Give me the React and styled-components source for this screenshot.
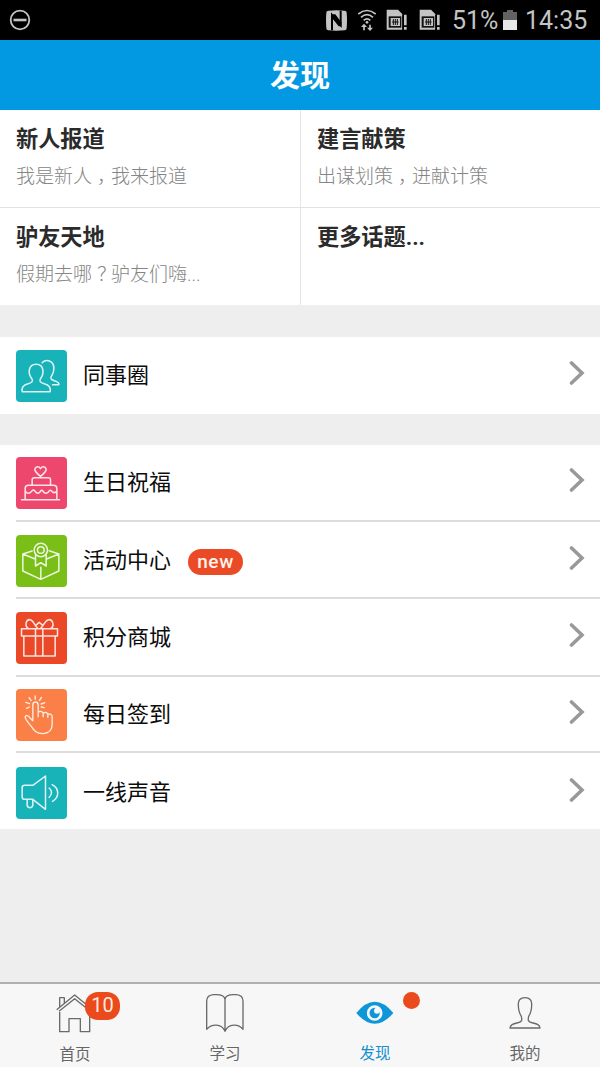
import React from "react";
import styled, { createGlobalStyle } from "styled-components";

const Global = createGlobalStyle`
  * { box-sizing: border-box; }
  body { margin: 0; background: #ededed; font-family: Roboto, "Noto Sans CJK SC", sans-serif; }
  svg { display: block; flex: none; }
`;

const Screen = styled.div`
  width: 600px;
  height: 1067px;
  display: flex;
  flex-direction: column;
  background: #eeeeee;
  overflow: hidden;
`;

const StatusBar = styled.div`
  height: 40px;
  flex: none;
  background: #000;
  display: flex;
  align-items: center;
  padding: 0 12px 0 9px;
  color: #c4c4c4;
`;
const StatusIcon = styled.svg`
  margin-right: ${(p) => p.$gap || 0}px;
`;
const StatusText = styled.span`
  width: ${(p) => p.$w}px;
  margin-right: ${(p) => p.$gap || 0}px;
  font-size: 25px;
  line-height: 40px;
  padding-top: 2px;
  white-space: nowrap;
`;
const Spacer = styled.div`
  flex: 1;
`;

const Header = styled.h1`
  height: 70px;
  flex: none;
  margin: 0;
  padding-top: 1px;
  background: #0399e2;
  color: #fff;
  font-size: 30px;
  font-weight: 700;
  line-height: 70px;
  text-align: center;
`;

const Topics = styled.div`
  display: grid;
  grid-template-columns: 301px 1fr;
  grid-template-rows: 98px 97px;
  background: #fff;
`;
const Topic = styled.div`
  padding: 13px 15px 0 16px;
  border-right: ${(p) => (p.$right ? "1px solid #e6e6e6" : "0")};
  border-bottom: ${(p) => (p.$bottom ? "1px solid #e2e2e2" : "0")};
`;
const TopicTitle = styled.div`
  font-size: 22.2px;
  font-weight: 700;
  line-height: 32px;
  color: #2b2b2b;
`;
const TopicText = styled.div`
  margin-top: 8px;
  font-size: 19px;
  font-weight: 300;
  line-height: 28px;
  color: #858585;
  white-space: nowrap;
`;
const Mark = styled.span`
  display: inline-block;
  width: 19px;
  padding-left: 5px;
  font-feature-settings: "halt";
`;

const List = styled.div`
  margin-top: ${(p) => p.$top}px;
  background: #fff;
`;
const Row = styled.div`
  height: ${(p) => p.$h}px;
  display: flex;
  align-items: center;
  margin-left: 16px;
  padding-right: 15px;
  padding-top: ${(p) => p.$shift || 0}px;
  border-bottom: ${(p) => (p.$last ? "0" : "2px solid #dcdcdf")};
`;
const Tile = styled.svg`
  width: 51px;
  height: 52px;
  border-radius: 4px;
  background: ${(p) => p.$bg};
  fill: none;
  stroke: #fff;
  stroke-opacity: 0.85;
  stroke-width: 4.6;
  stroke-linecap: round;
  stroke-linejoin: round;
`;
const RowLabel = styled.span`
  margin-left: 16px;
  font-size: 22px;
  line-height: 32px;
  color: #0c0c0c;
`;
const NewBadge = styled.span`
  width: 55px;
  height: 26px;
  margin: 3px 0 0 17px;
  border-radius: 13px;
  background: #eb4a26;
  color: #fff3ea;
  font-size: 19px;
  font-weight: 500;
  letter-spacing: 0.6px;
  line-height: 25px;
  text-align: center;
`;
const Chevron = styled.svg`
  margin: 0 0 5px auto;
  fill: none;
  stroke: #999;
  stroke-width: 3.6;
  stroke-linecap: round;
`;

const TabBar = styled.nav`
  height: 85px;
  flex: none;
  display: grid;
  grid-template-columns: repeat(4, 1fr);
  border-top: 2px solid #b0b0b0;
  background: #f7f7f7;
`;
const Tab = styled.div`
  position: relative;
  display: flex;
  flex-direction: column;
  align-items: center;
  padding-top: 6px;
  color: ${(p) => (p.$active ? "#1390cd" : "#666")};
  font-size: 15.5px;
  line-height: 22px;
`;
const TabIcon = styled.svg`
  width: 40px;
  height: 44px;
  margin-bottom: ${(p) => p.$gap}px;
  fill: none;
  stroke: #6a6a6a;
  stroke-width: 4;
  stroke-linejoin: round;
`;
const CountBadge = styled.span`
  position: absolute;
  left: 85px;
  top: 8px;
  width: 35px;
  height: 28px;
  border-radius: 13px;
  background: #eb4a1d;
  color: #ffe9dc;
  font-size: 20px;
  line-height: 27px;
  text-align: center;
`;
const DotBadge = styled.span`
  position: absolute;
  left: 103px;
  top: 8px;
  width: 17px;
  height: 17px;
  border-radius: 50%;
  background: #eb4a1d;
`;

const drawings = {
  friends: (
    <>
      <path d="M18 125C15 110 24 104 36 101C49 98 51 93 47 86C35 72 35 43 60 43C85 43 84 72 73 86C69 93 71 98 84 101C96 104 105 110 102 125Z" />
      <path d="M78 38C88 27 114 29 113 56C113 70 108 74 105 80C101 88 108 90 117 93C126 96 129 100 128 104H109" />
    </>
  ),
  cake: (
    <>
      <path d="M73 58C64 51 55 44 56 36C59 27 69 28 73 35C77 28 87 27 90 36C91 44 82 51 73 58Z" />
      <path d="M48 83V68Q48 62 54 62H97Q103 62 103 68V83" />
      <path d="M27 126V95Q27 85 37 85H112Q122 85 122 95V126M16 128H130M28 103C34 112 42 110 48 101Q52 97 56 102C63 112 70 110 74 101Q77 98 80 102C86 112 95 110 100 101Q104 98 108 104Q114 110 121 104" />
    </>
  ),
  box: (
    <>
      <circle cx="74" cy="45" r="20" />
      <circle cx="74" cy="45" r="10" />
      <path d="M58 60V93L74 83L90 93V60M48 48L20 57V108L74 133L128 108V57L99 47M20 57L55 71M128 57L93 71M74 97V133" />
    </>
  ),
  gift: (
    <>
      <path d="M16 50H124V72H16ZM23 72V132H117V72M58 50V132M80 50V132M65 49C56 44 54 26 42 23C29 21 25 42 36 49M73 49C82 44 85 26 97 23C110 21 116 42 104 49M59 40L69 31L80 40" />
    </>
  ),
  tap: (
    <g strokeWidth="4">
      <path d="M50 93V47Q51 39 58 39Q65 39 66 47V83M66 70Q74 63 81 72V83M81 73Q88 66 95 75V85M95 76Q106 72 108 83V106C108 125 98 133 80 134C60 134 53 124 46 113C37 101 27 92 27 84C28 77 36 79 41 86L50 95" />
      <path d="M57 21V31M39 26L45 35M76 25L70 34M29 40L40 44M86 41L75 45M31 58L40 54M84 56L75 54" />
    </g>
  ),
  horn: (
    <>
      <path d="M25 55H50L88 27V127L50 97H25Q18 97 18 90V62Q18 55 25 55ZM33 98V115Q34 122 42 122Q50 121 50 114V98M99 63Q113 76 99 91M108 53C130 64 130 91 109 103" />
    </>
  ),
};

const items = [
  { label: "生日祝福", icon: "cake", bg: "#ed476d", h: 77 },
  { label: "活动中心", icon: "box", bg: "#7abf18", h: 77, badge: "new", shift: 2 },
  { label: "积分商城", icon: "gift", bg: "#eb4827", h: 78, shift: 1 },
  { label: "每日签到", icon: "tap", bg: "#fb8048", h: 76, shift: 1 },
  { label: "一线声音", icon: "horn", bg: "#17b3b9", h: 76, shift: 3 },
];

function ListRow({ label, icon, bg, h, badge, last, shift }) {
  return (
    <Row $h={h} $last={last} $shift={shift}>
      <Tile viewBox="0 0 152 156" $bg={bg}>{drawings[icon]}</Tile>
      <RowLabel>{label}</RowLabel>
      {badge && <NewBadge>{badge}</NewBadge>}
      <Chevron width="16" height="24" viewBox="0 0 16 24">
        <path d="M2.5 2L13 12L2.5 22" />
      </Chevron>
    </Row>
  );
}

function SimIcon({ gap }) {
  return (
    <StatusIcon width="22" height="22" viewBox="0 0 66 66" $gap={gap}>
      <path d="M2 2H36L49 15V62H2Z" fill="#c4c4c4" />
      <path d="M49 18H66V66H49Z" fill="#000" />
      <path d="M8 22H46V56H8Z" fill="#111" />
      <path d="M14 27H42V51H14Z" fill="#c4c4c4" />
      <path d="M22 30V48M28 30V48M34 30V48M18 39H38" stroke="#111" strokeWidth="3" />
      <path d="M54 17H62V49H54ZM54 54H62V62H54Z" fill="#c4c4c4" />
    </StatusIcon>
  );
}

export default function App() {
  return (
    <Screen>
      <Global />
      <StatusBar>
        <StatusIcon width="22" height="22" viewBox="0 0 22 22" fill="none" stroke="#c4c4c4">
          <circle cx="11" cy="11" r="9.3" strokeWidth="1.8" />
          <path d="M4.5 11H17.5" strokeWidth="2.6" />
        </StatusIcon>
        <Spacer />
        <StatusIcon width="21" height="21" viewBox="0 0 63 63" $gap={10}>
          <path d="M7 2Q31 -1 56 2Q62 2 62 8Q64 31 62 55Q62 61 56 61Q31 63 7 61Q1 61 1 55Q-1 31 1 8Q1 2 7 2Z" fill="#c4c4c4" />
          <path d="M18 61V15L44 46V2" fill="none" stroke="#000" strokeWidth="6" />
          <path d="M18 13L28 13L46 37V49L38 49L18 24Z" fill="#000" />
        </StatusIcon>
        <StatusIcon width="20" height="22" viewBox="0 0 60 66" fill="none" stroke="#c4c4c4" strokeWidth="5" $gap={9}>
          <path d="M4 15Q30 -6 56 15M12 25Q30 9 48 25M20 34Q30 25 40 34" />
          <circle cx="30" cy="40" r="4" fill="#c4c4c4" stroke="none" />
          <path d="M21 64V51M39 47V58" />
          <path d="M12 54L21 44L30 54ZM30 56L39 66L48 56Z" fill="#c4c4c4" stroke="none" />
        </StatusIcon>
        <SimIcon gap={11} />
        <SimIcon gap={11} />
        <StatusText $w={46} $gap={5}>51%</StatusText>
        <StatusIcon width="14" height="20" viewBox="0 0 14 20" $gap={8}>
          <path d="M4 0H10V2H14V10H0V2H4Z" fill="#626262" />
          <path d="M0 10H14V20H0Z" fill="#e8e8e8" />
        </StatusIcon>
        <StatusText $w={63}>14:35</StatusText>
      </StatusBar>
      <Header>发现</Header>
      <Topics>
        <Topic $right $bottom>
          <TopicTitle>新人报道</TopicTitle>
          <TopicText>我是新人<Mark>，</Mark>我来报道</TopicText>
        </Topic>
        <Topic $bottom>
          <TopicTitle>建言献策</TopicTitle>
          <TopicText>出谋划策<Mark>，</Mark>进献计策</TopicText>
        </Topic>
        <Topic $right>
          <TopicTitle>驴友天地</TopicTitle>
          <TopicText>假期去哪<Mark>？</Mark>驴友们嗨...</TopicText>
        </Topic>
        <Topic>
          <TopicTitle>更多话题...</TopicTitle>
        </Topic>
      </Topics>
      <List $top={32}>
        <ListRow label="同事圈" icon="friends" bg="#17b3b9" h={77} last />
      </List>
      <List $top={31}>
        {items.map((item, i) => (
          <ListRow key={item.label} {...item} last={i === items.length - 1} />
        ))}
      </List>
      <Spacer />
      <TabBar>
        <Tab>
          <TabIcon viewBox="165 60 120 132" $gap={10}>
            <path d="M179 126V185H207V146H241V185H269V122M170 119L224 75L278 119M177 124L224 86L271 124M179 110V83H193V99" />
          </TabIcon>
          首页
          <CountBadge>10</CountBadge>
        </Tab>
        <Tab>
          <TabIcon viewBox="614 60 120 132" $gap={9}>
            <path d="M674 184V88C672 72 652 73 639 74C626 75 619 81 619 94V178C634 161 663 160 674 184C685 160 714 161 728 178V94C728 81 721 75 708 74C695 73 676 72 674 88" />
          </TabIcon>
          学习
        </Tab>
        <Tab $active>
          <TabIcon viewBox="165 60 120 132" $gap={9}>
            <path d="M169 129Q224 62 280 129Q224 194 169 129Z" fill="#0d96d8" stroke="none" />
            <circle cx="224" cy="129" r="19.5" stroke="#f7f7f7" strokeWidth="8" />
            <circle cx="231" cy="122" r="9" fill="#f7f7f7" stroke="none" />
          </TabIcon>
          发现
          <DotBadge />
        </Tab>
        <Tab>
          <TabIcon viewBox="614 60 120 132" $gap={9}>
            <path d="M629 174C630 164 637 161 650 159C665 157 666 151 663 139C657 130 654 119 654 105C653 90 660 83 674 83C688 83 695 90 694 105C694 119 691 130 685 139C682 151 683 157 698 159C711 161 718 164 719 174Z" />
          </TabIcon>
          我的
        </Tab>
      </TabBar>
    </Screen>
  );
}
